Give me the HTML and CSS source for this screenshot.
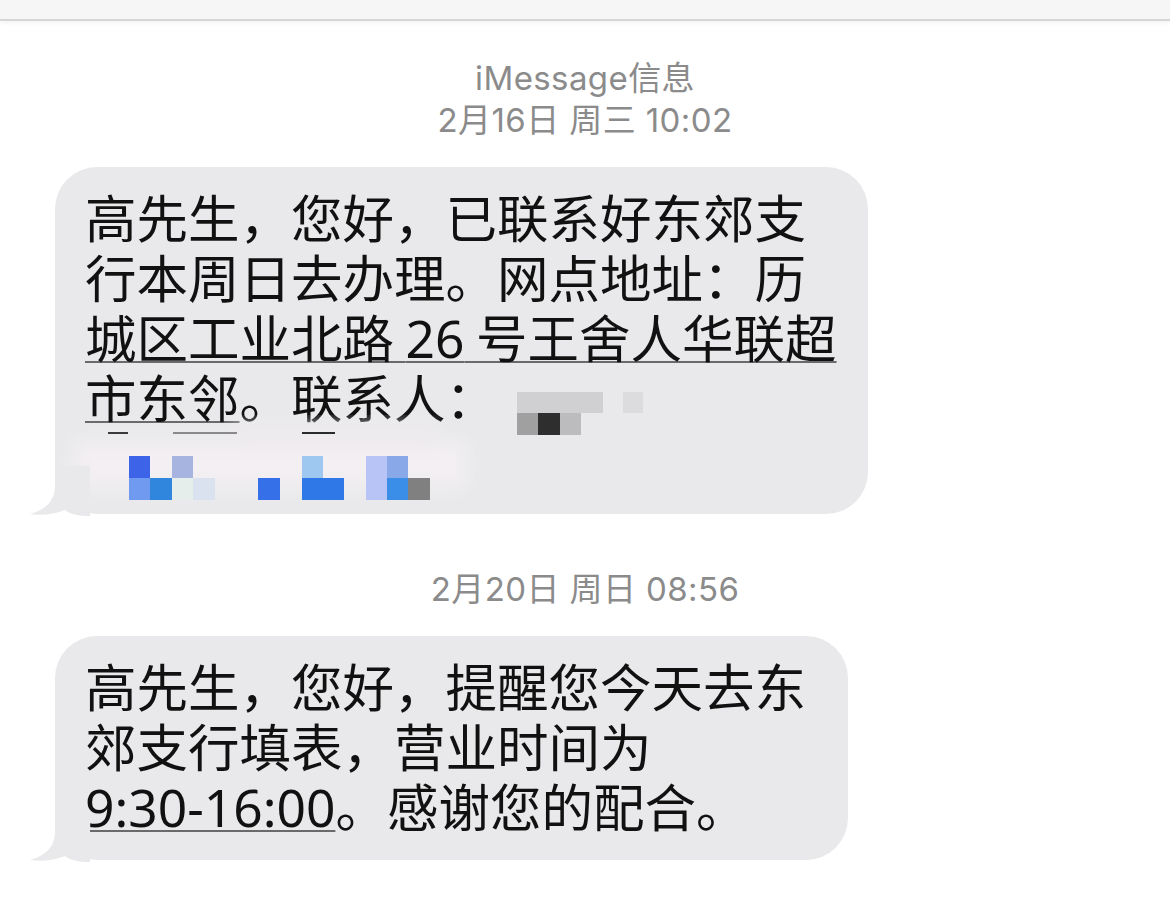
FILE: index.html
```html
<!DOCTYPE html>
<html lang="zh-CN">
<head>
<meta charset="utf-8">
<title>iMessage</title>
<link rel="stylesheet" href="styles.css">
</head>
<body>
<div class="topbar"></div>
<main class="thread">
  <div class="meta">
    <div class="service">iMessage信息</div>
    <div class="stamp">2月16日 周三 10:02</div>
  </div>
  <div class="bubble b1">
    <div class="line">高先生，您好，已联系好东郊支</div>
    <div class="line">行本周日去办理。网点地址：历</div>
    <div class="line"><span class="link">城区工业北路 <span class="num">26</span> 号王舍人华联超</span></div>
    <div class="line"><span class="link">市东邻</span>。联系人：</div>
    <div class="line">&nbsp;</div>
    <svg class="mosaic" width="420" height="360" viewBox="0 0 420 360" aria-hidden="true">
      <defs>
        <filter id="soft" x="-20%" y="-50%" width="140%" height="200%">
          <feGaussianBlur stdDeviation="8"/>
        </filter>
      </defs>
      <rect x="20" y="275" width="390" height="45" fill="#f3eff2" filter="url(#soft)"/>
      <rect x="180" y="258" width="200" height="20" fill="#efebef" filter="url(#soft)"/>
      <rect x="53" y="265" width="20" height="2" fill="#3a3a3a"/>
      <rect x="118" y="265" width="64" height="2" fill="#8a8a8a"/>
      <rect x="247" y="265" width="33" height="2" fill="#2a2a2a"/>
      <g>
        <rect x="74" y="289" width="21" height="22" fill="#3d63e8"/>
        <rect x="117" y="289" width="21" height="22" fill="#a8b4e0"/>
        <rect x="247" y="289" width="21" height="22" fill="#9ec8ef"/>
        <rect x="311" y="289" width="21" height="44" fill="#b8c4f5"/>
        <rect x="332" y="289" width="21" height="22" fill="#88a8e8"/>
        <rect x="74" y="311" width="21" height="22" fill="#6f9aef"/>
        <rect x="95" y="311" width="22" height="22" fill="#2f86dc"/>
        <rect x="117" y="311" width="21" height="22" fill="#e6eeec"/>
        <rect x="138" y="311" width="22" height="22" fill="#dae2ef"/>
        <rect x="203" y="311" width="22" height="22" fill="#3570e8"/>
        <rect x="247" y="311" width="42" height="22" fill="#2f78e8"/>
        <rect x="332" y="311" width="21" height="22" fill="#3b8ee8"/>
        <rect x="353" y="311" width="22" height="22" fill="#808080"/>
      </g>
    </svg>
    <svg class="mosaic2" width="130" height="45" viewBox="0 0 130 45" aria-hidden="true">
      <rect x="0" y="0" width="86" height="21" fill="#d0d0d2"/>
      <rect x="106" y="0" width="20" height="21" fill="#dcdcde"/>
      <rect x="0" y="21" width="21" height="22" fill="#a0a0a0"/>
      <rect x="21" y="21" width="22" height="22" fill="#2e2e2e"/>
      <rect x="43" y="21" width="21" height="22" fill="#bcbcbe"/>
    </svg>
    <svg class="tail" width="60" height="50" viewBox="0 0 60 50" aria-hidden="true"><path d="M25 0 L25 20 C25 35 15 44 0 48 C12 50 25 48 35 44 C40 48 48 50 60 50 L60 0 Z"/></svg>
  </div>
  <div class="meta m2">
    <div class="stamp">2月20日 周日 08:56</div>
  </div>
  <div class="bubble b2">
    <div class="line">高先生，您好，提醒您今天去东</div>
    <div class="line">郊支行填表，营业时间为</div>
    <div class="line"><span class="link num">9:30-16:00</span>。感谢您的配合。</div>
    <svg class="tail" width="60" height="50" viewBox="0 0 60 50" aria-hidden="true"><path d="M25 0 L25 20 C25 35 15 44 0 48 C12 50 25 48 35 44 C40 48 48 50 60 50 L60 0 Z"/></svg>
  </div>
</main>
</body>
</html>
```
FILE: styles.css
```css
html, body {
  margin: 0;
  padding: 0;
  background: #ffffff;
}
body {
  width: 1170px;
  height: 912px;
  overflow: hidden;
  font-family: "Noto Sans CJK SC", "Noto Sans", sans-serif;
  color: #111111;
}
.topbar {
  height: 19px;
  background: #f6f6f6;
  border-bottom: 2px solid #d6d6d6;
  box-shadow: 0 2px 5px rgba(0,0,0,0.05);
}
.thread {
  display: flex;
  flex-direction: column;
  padding: 0 0 0 55px;
}
.meta {
  width: 1060px;
  text-align: center;
  color: #8b8b8b;
  font-size: 33px;
  line-height: 42px;
  margin-top: 36px;
  font-family: Inter, "Noto Sans CJK SC", sans-serif;
  letter-spacing: 0.4px;
}
.meta.m2 {
  margin-top: 54px;
}
.bubble {
  position: relative;
  background: #e9e9eb;
  border-radius: 42px;
  box-sizing: border-box;
  padding: 19px 0 28px 30px;
  font-size: 51.5px;
  line-height: 60px;
  white-space: nowrap;
}
.b1 {
  width: 813px;
  margin-top: 26px;
}
.b2 {
  width: 793px;
  margin-top: 26px;
  padding-bottom: 25px;
}
.line {
  height: 60px;
}
.link {
  text-decoration: underline;
  text-decoration-color: #6a6a6a;
  text-decoration-thickness: 2px;
  text-underline-offset: 3px;
}
.num {
  font-family: "Noto Sans", sans-serif;
}
.mosaic {
  position: absolute;
  left: 0;
  top: 0;
  overflow: visible;
}
.mosaic2 {
  position: absolute;
  left: 462px;
  top: 225px;
}
.tail {
  position: absolute;
  left: -25px;
  bottom: -2px;
  fill: #e9e9eb;
}
```
